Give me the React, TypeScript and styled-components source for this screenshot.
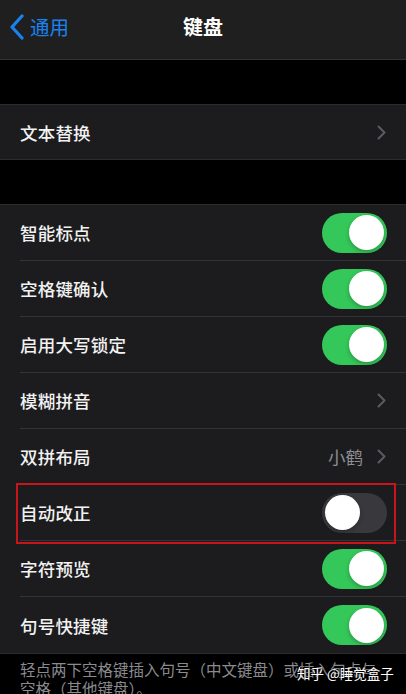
import React from "react";
import styled, { createGlobalStyle } from "styled-components";

const GlobalStyle = createGlobalStyle`
  html, body {
    margin: 0;
    padding: 0;
    background: #000;
  }
  body {
    font-family: "Noto Sans CJK SC", "Noto Sans", sans-serif;
    color: #fff;
    overflow: hidden;
  }
`;

const Screen = styled.div`
  width: 406px;
  height: 694px;
  background: #000;
  position: relative;
  overflow: hidden;
`;

const NavBar = styled.div`
  height: 60px;
  background: #1f1f1f;
  border-bottom: 1px solid #333335;
  display: grid;
  grid-template-columns: 1fr auto 1fr;
  align-items: center;
  box-sizing: border-box;
`;

const Back = styled.div`
  display: flex;
  align-items: center;
  gap: 6px;
  padding-left: 10px;
  color: #1a82f0;
  font-size: 19.5px;
  margin-top: -6px;
`;

const Title = styled.div`
  font-size: 20px;
  font-weight: 700;
  margin-top: -6px;
`;

const Gap = styled.div`
  height: 44px;
`;

const Group = styled.div`
  background: #1c1c1e;
  border-top: 1px solid #2c2c2e;
  border-bottom: 1px solid #2c2c2e;
`;

const Row = styled.div<{ $last?: boolean; $h?: number }>`
  height: ${(p) => p.$h ?? 56}px;
  margin-left: 20px;
  padding-right: 20px;
  display: flex;
  align-items: center;
  justify-content: space-between;
  box-sizing: border-box;
  border-bottom: ${(p) => (p.$last ? "none" : "1px solid #333336")};
  position: relative;
`;

const Label = styled.span`
  font-size: 17.5px;
  font-weight: 500;
  color: #f2f2f2;
  letter-spacing: 0.2px;
`;

const Right = styled.div`
  display: flex;
  align-items: center;
  gap: 14px;
`;

const Value = styled.span`
  font-size: 17.5px;
  color: #8e8e93;
`;

const Toggle = styled.div<{ $on: boolean }>`
  width: 65px;
  height: 40px;
  border-radius: 20px;
  background: ${(p) => (p.$on ? "#34c759" : "#39393d")};
  position: relative;
  margin-right: -1px;

  &::after {
    content: "";
    position: absolute;
    top: 2.5px;
    left: ${(p) => (p.$on ? "27px" : "3px")};
    width: 35px;
    height: 35px;
    border-radius: 50%;
    background: #fff;
    box-shadow: 0 2px 4px rgba(0, 0, 0, 0.25);
  }
`;

const Highlight = styled.div`
  position: absolute;
  left: -4px;
  right: 10px;
  top: -2px;
  bottom: -4px;
  border: 2px solid #c8141a;
  pointer-events: none;
`;

const Footer = styled.div`
  padding: 6px 20px 0 20px;
  font-size: 15.5px;
  line-height: 19px;
  color: #8a8a8f;
  position: relative;
`;

const Watermark = styled.div`
  position: absolute;
  left: 297px;
  top: 10px;
  font-size: 13.5px;
  color: #fff;
  text-shadow: 0 0 3px rgba(0, 0, 0, 0.9);
  white-space: nowrap;
`;

const Chevron = () => (
  <svg width="9" height="15" viewBox="0 0 9 15">
    <path d="M1.5 1.5 L7.5 7.5 L1.5 13.5" fill="none" stroke="#5b5b60" strokeWidth="2" strokeLinecap="round" strokeLinejoin="round" />
  </svg>
);

const BackChevron = () => (
  <svg width="14" height="26" viewBox="0 0 14 26">
    <path d="M12 2 L2 13 L12 24" fill="none" stroke="#1a82f0" strokeWidth="3.2" strokeLinecap="round" strokeLinejoin="round" />
  </svg>
);

type Item = {
  label: string;
  toggle?: boolean;
  value?: string;
  highlight?: boolean;
};

const items: Item[] = [
  { label: "智能标点", toggle: true },
  { label: "空格键确认", toggle: true },
  { label: "启用大写锁定", toggle: true },
  { label: "模糊拼音" },
  { label: "双拼布局", value: "小鹤" },
  { label: "自动改正", toggle: false, highlight: true },
  { label: "字符预览", toggle: true },
  { label: "句号快捷键", toggle: true },
];

function App() {
  return (
    <Screen>
      <GlobalStyle />
      <NavBar>
        <Back>
          <BackChevron />
          <span>通用</span>
        </Back>
        <Title>键盘</Title>
        <div />
      </NavBar>
      <Gap />
      <Group>
        <Row $last $h={54}>
          <Label>文本替换</Label>
          <Chevron />
        </Row>
      </Group>
      <Gap />
      <Group>
        {items.map((it, i) => (
          <Row key={it.label} $last={i === items.length - 1}>
            <Label>{it.label}</Label>
            <Right>
              {it.value && <Value>{it.value}</Value>}
              {it.toggle === undefined ? <Chevron /> : <Toggle $on={it.toggle} />}
            </Right>
            {it.highlight && <Highlight />}
          </Row>
        ))}
      </Group>
      <Footer>
        轻点两下空格键插入句号（中文键盘）或插入句点与空格（其他键盘）。
        <Watermark>知乎 @睡觉盒子</Watermark>
      </Footer>
    </Screen>
  );
}

export default App;
